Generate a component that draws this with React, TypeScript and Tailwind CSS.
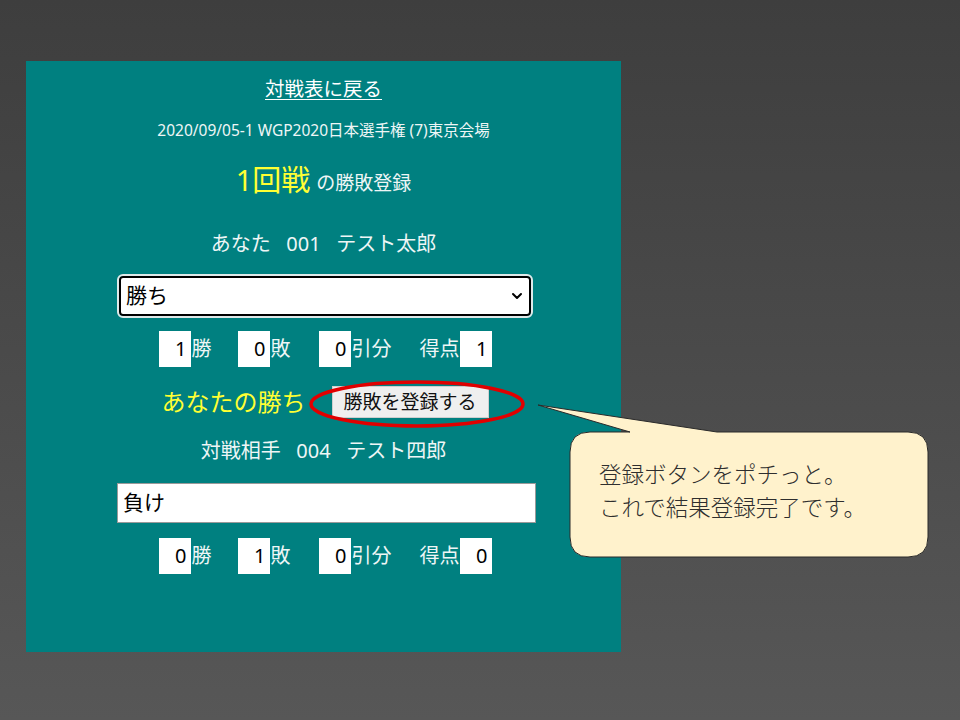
import { ChevronDown } from "lucide-react";

const font = { fontFamily: '"Noto Sans", "Noto Sans CJK JP", sans-serif' };

const ScoreRow = ({ win, lose, draw, point }: { win: number; lose: number; draw: number; point: number }) => {
  const box = "w-[32px] h-[36px] bg-white text-black text-[20px] leading-[36px] text-right pr-[4px]";
  return (
    <div className="flex items-center h-[36px] text-[20px] text-[#eef6f6]">
      <div className={box}>{win}</div>
      <span className="ml-[1px]">勝</span>
      <div className={box + " ml-[26px]"}>{lose}</div>
      <span className="ml-[1px]">敗</span>
      <div className={box + " ml-[28px]"}>{draw}</div>
      <span className="ml-[1px]">引分</span>
      <span className="ml-[28px]">得点</span>
      <div className={box}>{point}</div>
    </div>
  );
};

export default function App() {
  return (
    <div
      className="relative w-[960px] h-[720px] overflow-hidden bg-gradient-to-b from-[#3e3e3e] to-[#575757] pt-[61px] pl-[26px]"
      style={font}
    >
      {/* main panel */}
      <div className="w-[595px] h-[591px] bg-[#008080] flex flex-col items-center text-[#eef6f6]">
        <a href="#" className="mt-[16px] h-[24px] leading-[24px] text-[19.5px] underline underline-offset-[3px] text-white">
          対戦表に戻る
        </a>
        <div className="mt-[19px] h-[20px] leading-[20px] text-[15.5px]">
          2020/09/05-1 WGP2020日本選手権 (7)東京会場
        </div>
        <div className="mt-[22px] h-[36px] flex items-end leading-[36px]">
          <span className="text-[29px] text-[#ffff33]">1回戦</span>
          <span className="ml-[6px] text-[19px] leading-[30px]">の勝敗登録</span>
        </div>
        <div className="mt-[34px] h-[24px] leading-[24px] text-[20px] whitespace-pre">
          あなた   001   テスト太郎
        </div>
        <div className="mt-[20px] w-[412px] h-[40px] ml-[3px] rounded-[4px] bg-white border-2 border-black outline-2 outline-[#dfe9e9] flex items-center justify-between pl-[5px] pr-[4px] text-black text-[21px]">
          <span>勝ち</span>
          <ChevronDown size={16} strokeWidth={3} />
        </div>
        <div className="mt-[15px] ml-[3px]">
          <ScoreRow win={1} lose={0} draw={0} point={1} />
        </div>
        <div className="mt-[19px] h-[32px] ml-[3px] flex items-center">
          <span className="text-[24px] text-[#ffff33] leading-[32px]">あなたの勝ち</span>
          <button className="ml-[26px] w-[157px] h-[32px] bg-[#efefef] text-[#111] text-[19px] border border-[#cfcfcf]">
            勝敗を登録する
          </button>
        </div>
        <div className="mt-[21px] h-[24px] leading-[24px] text-[20px] whitespace-pre">
          対戦相手   004   テスト四郎
        </div>
        <div className="mt-[20px] w-[419px] h-[40px] ml-[6px] bg-white border border-[#9a9a9a] flex items-center pl-[5px] text-black text-[21px]">
          負け
        </div>
        <div className="mt-[15px] ml-[3px]">
          <ScoreRow win={0} lose={1} draw={0} point={0} />
        </div>
      </div>

      {/* red ellipse annotation */}
      <svg className="absolute left-[306px] top-[378px]" width="222" height="52" viewBox="0 0 222 52">
        <ellipse cx="111" cy="26" rx="106" ry="22" fill="none" stroke="#e00000" strokeWidth="3.5" />
      </svg>

      {/* callout */}
      <svg className="absolute left-[530px] top-[398px]" width="410" height="170" viewBox="0 0 410 170">
        <path
          d="M60 34 L100 34 L8 7 L187 34 L378 34 Q398 34 398 54 L398 139 Q398 159 378 159 L60 159 Q40 159 40 139 L40 54 Q40 34 60 34 Z"
          fill="#fff2cc"
          stroke="#2a2a2a"
          strokeWidth="1"
        />
      </svg>
      <div className="absolute left-[599px] top-[458px] text-[22.5px] leading-[33px] text-[#2e2e2e] font-light">
        <div>登録ボタンをポチっと。</div>
        <div>これで結果登録完了です。</div>
      </div>
    </div>
  );
}
